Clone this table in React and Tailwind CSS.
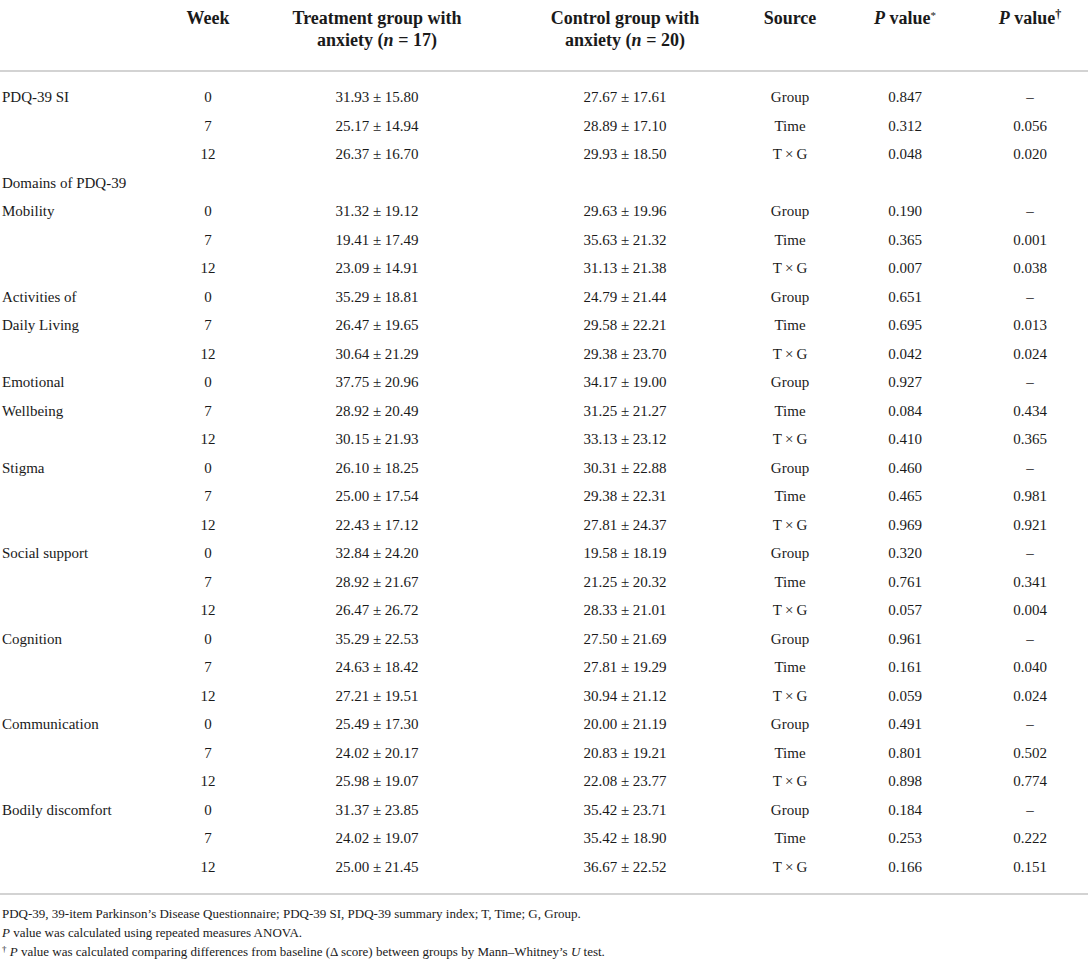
import React from "react";

const groups = [
  {
    label: ["PDQ-39 SI", "", ""],
    rows: [
      ["0", "31.93 ± 15.80", "27.67 ± 17.61", "0.847", "–"],
      ["7", "25.17 ± 14.94", "28.89 ± 17.10", "0.312", "0.056"],
      ["12", "26.37 ± 16.70", "29.93 ± 18.50", "0.048", "0.020"],
    ],
  },
  { heading: "Domains of PDQ-39" },
  {
    label: ["Mobility", "", ""],
    rows: [
      ["0", "31.32 ± 19.12", "29.63 ± 19.96", "0.190", "–"],
      ["7", "19.41 ± 17.49", "35.63 ± 21.32", "0.365", "0.001"],
      ["12", "23.09 ± 14.91", "31.13 ± 21.38", "0.007", "0.038"],
    ],
  },
  {
    label: ["Activities of", "Daily Living", ""],
    rows: [
      ["0", "35.29 ± 18.81", "24.79 ± 21.44", "0.651", "–"],
      ["7", "26.47 ± 19.65", "29.58 ± 22.21", "0.695", "0.013"],
      ["12", "30.64 ± 21.29", "29.38 ± 23.70", "0.042", "0.024"],
    ],
  },
  {
    label: ["Emotional", "Wellbeing", ""],
    rows: [
      ["0", "37.75 ± 20.96", "34.17 ± 19.00", "0.927", "–"],
      ["7", "28.92 ± 20.49", "31.25 ± 21.27", "0.084", "0.434"],
      ["12", "30.15 ± 21.93", "33.13 ± 23.12", "0.410", "0.365"],
    ],
  },
  {
    label: ["Stigma", "", ""],
    rows: [
      ["0", "26.10 ± 18.25", "30.31 ± 22.88", "0.460", "–"],
      ["7", "25.00 ± 17.54", "29.38 ± 22.31", "0.465", "0.981"],
      ["12", "22.43 ± 17.12", "27.81 ± 24.37", "0.969", "0.921"],
    ],
  },
  {
    label: ["Social support", "", ""],
    rows: [
      ["0", "32.84 ± 24.20", "19.58 ± 18.19", "0.320", "–"],
      ["7", "28.92 ± 21.67", "21.25 ± 20.32", "0.761", "0.341"],
      ["12", "26.47 ± 26.72", "28.33 ± 21.01", "0.057", "0.004"],
    ],
  },
  {
    label: ["Cognition", "", ""],
    rows: [
      ["0", "35.29 ± 22.53", "27.50 ± 21.69", "0.961", "–"],
      ["7", "24.63 ± 18.42", "27.81 ± 19.29", "0.161", "0.040"],
      ["12", "27.21 ± 19.51", "30.94 ± 21.12", "0.059", "0.024"],
    ],
  },
  {
    label: ["Communication", "", ""],
    rows: [
      ["0", "25.49 ± 17.30", "20.00 ± 21.19", "0.491", "–"],
      ["7", "24.02 ± 20.17", "20.83 ± 19.21", "0.801", "0.502"],
      ["12", "25.98 ± 19.07", "22.08 ± 23.77", "0.898", "0.774"],
    ],
  },
  {
    label: ["Bodily discomfort", "", ""],
    rows: [
      ["0", "31.37 ± 23.85", "35.42 ± 23.71", "0.184", "–"],
      ["7", "24.02 ± 19.07", "35.42 ± 18.90", "0.253", "0.222"],
      ["12", "25.00 ± 21.45", "36.67 ± 22.52", "0.166", "0.151"],
    ],
  },
];

const sources = [
  "Group",
  "Time",
  <>
    T<span className="mx-[3px]">×</span>G
  </>,
];
const cols =
  "grid grid-cols-[170px_76px_262px_234px_96px_134px_116px]";

function Row({ label, cells, source }) {
  return (
    <div className={`${cols} h-[28.5px] items-center`}>
      <div className="pl-[2px] whitespace-nowrap">{label}</div>
      {cells ? (
        <>
          <div className="text-center">{cells[0]}</div>
          <div className="text-center">{cells[1]}</div>
          <div className="text-center">{cells[2]}</div>
          <div className="text-center">{source}</div>
          <div className="text-center">{cells[3]}</div>
          <div className="text-center">{cells[4]}</div>
        </>
      ) : null}
    </div>
  );
}

export default function App() {
  return (
    <div
      className="w-[1089px] bg-white text-[#1a1a1a]"
      style={{ fontFamily: '"Liberation Serif", "Times New Roman", serif' }}
    >
      <div className="w-[1088px]">
        {/* Header */}
        <div
          className={`${cols} pt-[7px] pb-[19px] text-[18px] font-bold leading-[22px] items-start`}
        >
          <div></div>
          <div className="text-center">Week</div>
          <div className="text-center">
            Treatment group with
            <br />
            anxiety (<span className="italic">n</span> = 17)
          </div>
          <div className="text-center">
            Control group with
            <br />
            anxiety (<span className="italic">n</span> = 20)
          </div>
          <div className="text-center">Source</div>
          <div className="text-center">
            <span className="italic">P</span> value
            <sup className="text-[11px] font-normal">*</sup>
          </div>
          <div className="text-center">
            <span className="italic">P</span> value
            <sup className="text-[12px]">†</sup>
          </div>
        </div>
        <div className="h-[2px] bg-[#d3d3d3]"></div>

        {/* Body */}
        <div className="pt-[11px] pb-[12px] text-[15px]">
          {groups.map((g, gi) =>
            g.heading ? (
              <Row key={gi} label={g.heading} />
            ) : (
              g.rows.map((r, ri) => (
                <Row
                  key={`${gi}-${ri}`}
                  label={g.label[ri]}
                  cells={r}
                  source={sources[ri]}
                />
              ))
            )
          )}
        </div>
        <div className="h-[2px] bg-[#d3d3d3]"></div>

        {/* Footnotes */}
        <div className="pt-[9px] pl-[2px] text-[13px] leading-[19px]">
          <div>
            PDQ-39, 39-item Parkinson’s Disease Questionnaire; PDQ-39 SI,
            PDQ-39 summary index; T, Time; G, Group.
          </div>
          <div>
            <span className="italic">P</span> value was calculated using
            repeated measures ANOVA.
          </div>
          <div>
            <sup className="text-[9px]">†</sup>{" "}
            <span className="italic">P</span> value was calculated comparing
            differences from baseline (Δ score) between groups by
            Mann–Whitney’s <span className="italic">U</span> test.
          </div>
        </div>
      </div>
    </div>
  );
}
